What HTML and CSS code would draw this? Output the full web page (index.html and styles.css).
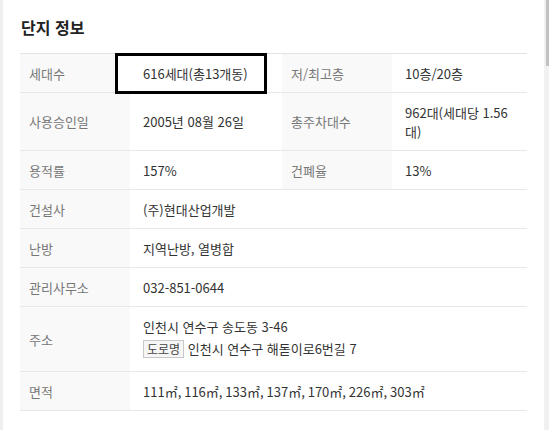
FILE: index.html
```html
<!DOCTYPE html>
<html lang="ko">
<head>
  <meta charset="UTF-8">
  <meta name="viewport" content="width=device-width, initial-scale=1.0">
  <title>단지 정보</title>
  <link rel="stylesheet" href="styles.css">
</head>
<body>
  <div class="page">
    <div class="edge"></div>
    <div class="content">
      <h2 class="title">단지 정보</h2>
      <table class="info">
        <colgroup>
          <col class="col-th">
          <col class="col-td1">
          <col class="col-th">
          <col class="col-td2">
        </colgroup>
        <tr>
          <th>세대수</th>
          <td class="marked"><span class="mark">616세대(총13개동)</span></td>
          <th>저/최고층</th>
          <td>10층/20층</td>
        </tr>
        <tr>
          <th>사용승인일</th>
          <td>2005년 08월 26일</td>
          <th>총주차대수</th>
          <td>962대(세대당 1.56대)</td>
        </tr>
        <tr>
          <th>용적률</th>
          <td>157%</td>
          <th>건폐율</th>
          <td>13%</td>
        </tr>
        <tr>
          <th>건설사</th>
          <td colspan="3">(주)현대산업개발</td>
        </tr>
        <tr>
          <th>난방</th>
          <td colspan="3">지역난방, 열병합</td>
        </tr>
        <tr>
          <th>관리사무소</th>
          <td colspan="3">032-851-0644</td>
        </tr>
        <tr>
          <th>주소</th>
          <td colspan="3">
            <div>인천시 연수구 송도동 3-46</div>
            <div class="road"><span class="badge">도로명</span> 인천시 연수구 해돋이로6번길 7</div>
          </td>
        </tr>
        <tr>
          <th>면적</th>
          <td colspan="3">111㎡, 116㎡, 133㎡, 137㎡, 170㎡, 226㎡, 303㎡</td>
        </tr>
      </table>
    </div>
    <div class="scrollbar"><div class="thumb"></div></div>
  </div>
</body>
</html>
```

FILE: styles.css
```css
html, body {
  margin: 0;
  padding: 0;
  height: 100%;
  background-color: white;
  font-family: "Noto Sans CJK KR", "Noto Sans", sans-serif;
  color: #333;
}

.page {
  display: flex;
  height: 100%;
}

.edge {
  width: 3px;
  background-color: #efefef;
}

.content {
  flex: 1;
  padding: 0 17px;
}

.title {
  margin: 0;
  padding: 16px 0 15px 1px;
  font-size: 16px;
  line-height: 22px;
  font-weight: bold;
  color: #222;
}

.info {
  width: 507px;
  border-collapse: collapse;
  border-top: 1px solid #e3e3e3;
  table-layout: fixed;
  font-size: 13px;
  line-height: 19px;
}

.col-th { width: 110px; }
.col-td1 { width: 152px; }
.col-td2 { width: 135px; }

.info th,
.info td {
  border-bottom: 1px solid #e8e8e8;
  padding: 9.5px 8px 9.5px 13px;
  text-align: left;
  vertical-align: middle;
}

.info th {
  background-color: #f9f9f9;
  color: #777;
  font-weight: normal;
  padding-left: 9px;
}

.info td {
  color: #333;
}

.marked {
  position: relative;
}

.mark {
  position: absolute;
  left: -15px;
  top: -1px;
  width: 152px;
  height: 41px;
  box-sizing: border-box;
  border: 3px solid #000;
  background-color: white;
  padding-left: 25px;
  display: flex;
  align-items: center;
}

.road {
  margin: 2px 0;
  line-height: 22px;
}

.badge {
  display: inline-block;
  border: 1px solid #c8c8c8;
  background-color: #f6f6f6;
  color: #444;
  font-size: 12px;
  line-height: 16px;
  padding: 0 3px;
}

.scrollbar {
  width: 5px;
  background-color: #f1f1f1;
}

.thumb {
  margin-left: 2px;
  height: 66px;
  background-color: #c1c1c1;
}
```
